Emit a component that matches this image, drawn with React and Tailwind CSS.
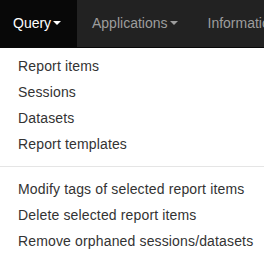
import React from "react";

const Caret = ({ color }) => (
  <span
    className="inline-block ml-[2px] align-middle"
    style={{
      width: 0,
      height: 0,
      borderTop: `4px solid ${color}`,
      borderLeft: "4px solid transparent",
      borderRight: "4px solid transparent",
    }}
  />
);

export default function App() {
  const group1 = ["Report items", "Sessions", "Datasets", "Report templates"];
  const group2 = [
    "Modify tags of selected report items",
    "Delete selected report items",
    "Remove orphaned sessions/datasets",
  ];
  return (
    <div
      className="w-[264px] h-[258px] overflow-hidden bg-white text-[14px] leading-[20px]"
      style={{ fontFamily: '"Liberation Sans", Arial, Helvetica, sans-serif' }}
    >
      <nav className="flex h-[48px] bg-[#222222] border-b border-[#080808] whitespace-nowrap">
        <div className="flex items-start bg-[#080808] text-white pl-[13px] pr-[15px] pt-[13px] w-[77px] shrink-0">
          <span>Query</span>
          <span className="h-[20px] flex items-center">
            <Caret color="#ffffff" />
          </span>
        </div>
        <div className="flex items-start text-[#9d9d9d] px-[15px] pt-[13px] shrink-0">
          <span>Applications</span>
          <span className="h-[20px] flex items-center">
            <Caret color="#9d9d9d" />
          </span>
        </div>
        <div className="flex items-start text-[#9d9d9d] pl-[15px] pt-[13px] shrink-0">
          <span>Information</span>
        </div>
      </nav>
      <ul className="pt-[5px] text-[#333333] tracking-[0.15px]">
        {group1.map((t) => (
          <li key={t} className="py-[3px] pl-[18px] whitespace-nowrap">
            {t}
          </li>
        ))}
        <li className="h-px bg-[#e5e5e5] my-[9px]" />
        {group2.map((t) => (
          <li key={t} className="py-[3px] pl-[18px] whitespace-nowrap">
            {t}
          </li>
        ))}
      </ul>
    </div>
  );
}
